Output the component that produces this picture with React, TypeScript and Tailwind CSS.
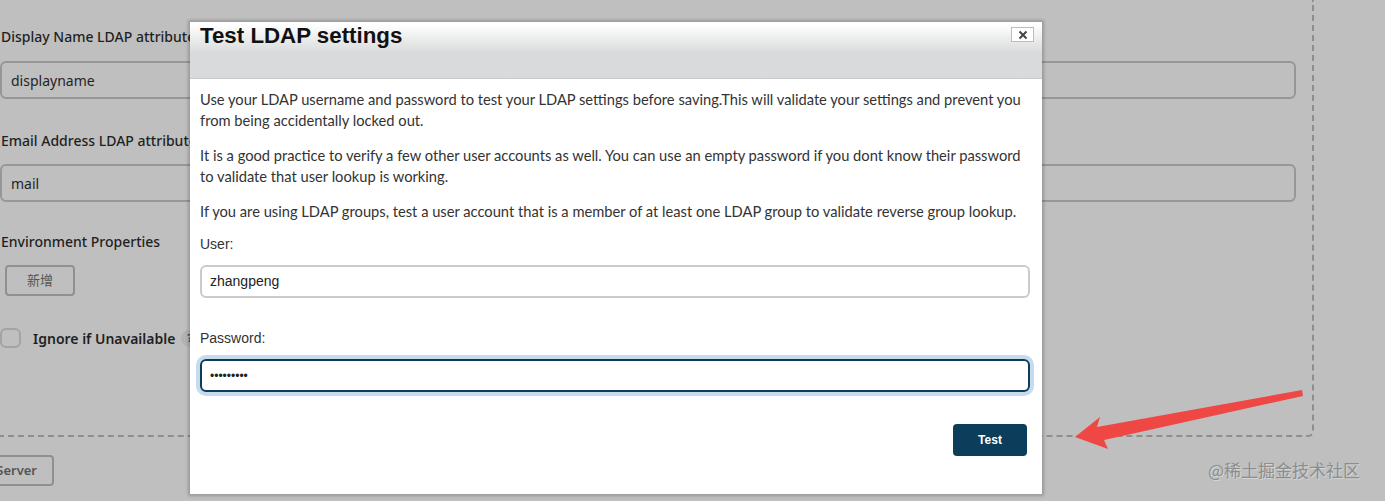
const bodyParagraphs: string[] = [
  "Use your LDAP username and password to test your LDAP settings before saving.This will validate your settings and prevent you from being accidentally locked out.",
  "It is a good practice to verify a few other user accounts as well. You can use an empty password if you dont know their password to validate that user lookup is working.",
  "If you are using LDAP groups, test a user account that is a member of at least one LDAP group to validate reverse group lookup.",
];

function BackgroundForm() {
  return (
    <div className="font-['Noto_Sans','Noto_Sans_CJK_SC',sans-serif] text-[#1f1f1f]">
      <div className="w-[1314px] rounded-br-md border-r-2 border-b-2 border-dashed border-[#8e8e8e] pr-[16px] pt-[27px] pb-[87px]">
        <div className="pl-px text-[14px] leading-[20px] font-medium">Display Name LDAP attribute</div>
        <div className="mt-[14px] flex h-[38px] items-center rounded-md border-2 border-[#979797] pl-[9px] text-[14px]">
          displayname
        </div>
        <div className="mt-[32px] pl-px text-[14px] leading-[20px] font-medium">Email Address LDAP attribute</div>
        <div className="mt-[13px] flex h-[38px] items-center rounded-md border-2 border-[#979797] pl-[9px] text-[14px]">
          mail
        </div>
        <div className="mt-[30px] pl-px text-[14px] leading-[20px] font-medium">Environment Properties</div>
        <button className="mt-[13px] ml-[5px] flex h-[31px] w-[70px] items-center justify-center rounded-[4px] border-2 border-[#909090] text-[13px] text-[#555]">
          新增
        </button>
        <div className="mt-[32px] flex h-[20px] items-center">
          <span className="h-[20px] w-[21px] rounded-md border-2 border-[#a3a3a3]" />
          <span className="ml-[12px] text-[14px] font-semibold">Ignore if Unavailable</span>
          <span className="ml-[6px] flex h-[17px] w-[17px] items-center justify-center rounded-full bg-[#b3b3b3] text-[11px] font-bold text-[#444]">
            ?
          </span>
        </div>
      </div>
      <button className="mt-[18px] -ml-[14px] flex h-[31px] w-[68px] items-center justify-end rounded-[4px] border-2 border-[#909090] pr-[15px] text-[13px] font-semibold text-[#555]">
        Server
      </button>
    </div>
  );
}

function TestDialog() {
  return (
    <div className="absolute left-[190px] top-[22px] flex h-[472px] w-[852px] flex-col bg-white shadow-[0_0_3px_2px_rgba(0,0,0,0.2)]">
      <div className="relative h-[57px] border-b border-[#c9c9c9] bg-gradient-to-b from-white from-5% to-[#d9dadb] to-55% pl-[10px]">
        <h2 className="pt-[1px] font-['Liberation_Sans',Arial,sans-serif] text-[22.3px] leading-[26px] font-bold text-[#111]">
          Test LDAP settings
        </h2>
        <button className="absolute right-[8px] top-[5px] flex h-[15px] w-[23px] items-center justify-center border border-[#bdbdbd] bg-white">
          <svg width="10" height="10" viewBox="0 0 10 10">
            <path d="M1.5 1.5 L8.5 8.5 M8.5 1.5 L1.5 8.5" stroke="#444" strokeWidth="2" />
          </svg>
        </button>
      </div>
      <div className="pl-[10px] pr-[6px] pt-[10px]">
        <div className="font-['Lato','Noto_Sans',sans-serif] text-[14.7px] leading-[21px] text-[#333]">
          {bodyParagraphs.map((text) => (
            <p key={text} className="mb-[14px] last:mb-0">
              {text}
            </p>
          ))}
        </div>
        <div className="font-['Liberation_Sans',Arial,sans-serif] text-[14px] text-[#333]">
          <label className="mt-[14px] block leading-[16px]">User:</label>
          <div className="mt-[13px] flex h-[33px] w-[830px] items-center rounded-md border-2 border-[#cbcbcb] pl-[8px] text-[#222]">
            zhangpeng
          </div>
          <label className="mt-[32px] block leading-[16px]">Password:</label>
          <div className="mt-[13px] flex h-[33px] w-[830px] items-center rounded-md border-2 border-[#0d3b59] pl-[8px] text-[12px] text-[#222] shadow-[0_0_0_4px_#c6dcec]">
            •••••••••
          </div>
          <div className="mt-[32px] flex w-[830px] justify-end pr-[3px]">
            <button className="flex h-[32px] w-[74px] items-center justify-center rounded-[4px] bg-[#0c3d5b] text-[12px] font-bold text-white">
              Test
            </button>
          </div>
        </div>
      </div>
    </div>
  );
}

export default function App() {
  return (
    <div className="relative h-[501px] w-[1385px] overflow-hidden bg-[#bfbfbf]">
      <BackgroundForm />
      <TestDialog />
      <svg className="absolute left-0 top-0" width="1385" height="501" viewBox="0 0 1385 501">
        <polygon
          points="1075,437 1100,417 1097,427 1302,390 1303,396 1104,440 1108,449"
          fill="#ef4743"
        />
      </svg>
      <div className="absolute left-[1208px] top-[459px] font-['Noto_Sans_CJK_SC',sans-serif] text-[17px] leading-[22px] text-[#8d8d8d] [text-shadow:1px_1px_0_rgba(255,255,255,0.35)]">
        @稀土掘金技术社区
      </div>
    </div>
  );
}
